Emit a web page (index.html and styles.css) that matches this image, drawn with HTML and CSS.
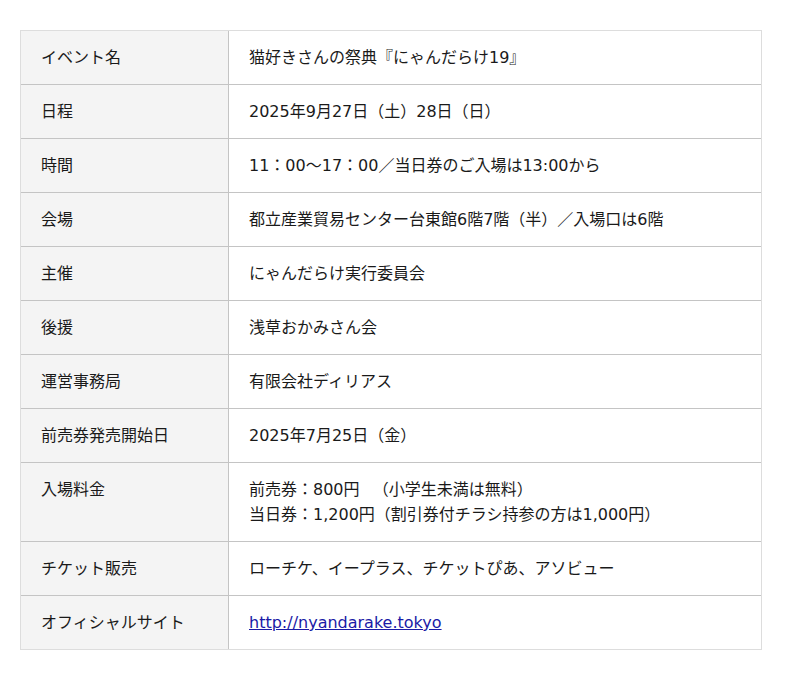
FILE: index.html
```html
<!DOCTYPE html>
<html lang="ja">
<head>
<meta charset="utf-8">
<link rel="stylesheet" href="styles.css">
</head>
<body>
<div class="page">
<table class="info">
<tr><th>イベント名</th><td>猫好きさんの祭典『にゃんだらけ19』</td></tr>
<tr><th>日程</th><td>2025年9月27日（土）28日（日）</td></tr>
<tr><th>時間</th><td>11：00～17：00／当日券のご入場は13:00から</td></tr>
<tr><th>会場</th><td>都立産業貿易センター台東館6階7階（半）／入場口は6階</td></tr>
<tr><th>主催</th><td>にゃんだらけ実行委員会</td></tr>
<tr><th>後援</th><td>浅草おかみさん会</td></tr>
<tr><th>運営事務局</th><td>有限会社ディリアス</td></tr>
<tr><th>前売券発売開始日</th><td>2025年7月25日（金）</td></tr>
<tr><th>入場料金</th><td>前売券：800円 　（小学生未満は無料）<br>当日券：1,200円（割引券付チラシ持参の方は1,000円）</td></tr>
<tr><th>チケット販売</th><td>ローチケ、イープラス、チケットぴあ、アソビュー</td></tr>
<tr><th>オフィシャルサイト</th><td><a href="#">http://nyandarake.tokyo</a></td></tr>
</table>
</div>
</body>
</html>
```

FILE: styles.css
```css
html, body {
  margin: 0;
  padding: 0;
  background: #fff;
}
.page {
  padding: 30px 20px;
}
.info {
  width: 742px;
  border-collapse: separate;
  border-spacing: 0;
  border: 1px solid #ddd;
  font-family: "DejaVu Sans", "Noto Sans CJK JP", sans-serif;
  font-size: 16px;
  line-height: 25px;
  color: #1a1a1a;
}
.info th, .info td {
  padding: 14px 20px 14px 20px;
  text-align: left;
  vertical-align: top;
  font-weight: normal;
  border-bottom: 1px solid #c4c4c4;
}
.info tr:last-child th, .info tr:last-child td {
  border-bottom: none;
}
.info th {
  width: 167px;
  background: #f4f4f4;
  border-right: 1px solid #c4c4c4;
}
.info a {
  color: #1a1aa6;
}
```
